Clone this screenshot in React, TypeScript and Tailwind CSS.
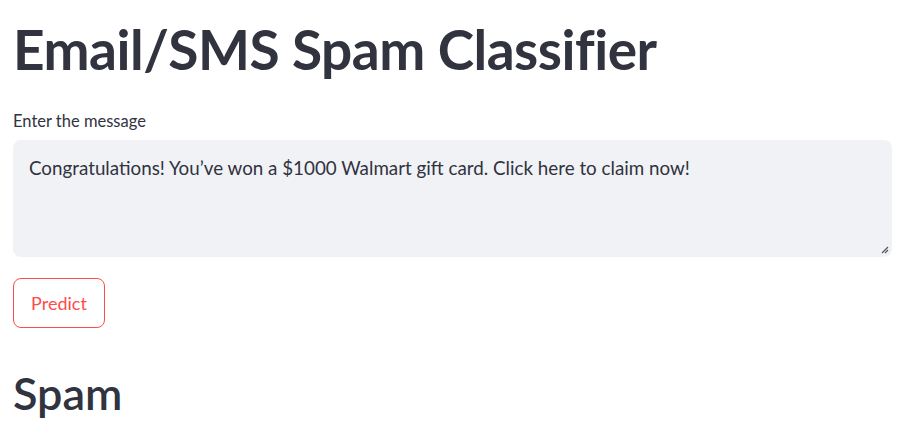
const font = { fontFamily: "Lato, 'Noto Sans', sans-serif" };

export default function App() {
  return (
    <div
      className="w-[898px] h-[421px] overflow-hidden bg-white text-[#31333f] px-[13px]"
      style={font}
    >
      <h1 className="text-[55px] font-bold leading-none pt-[22px] tracking-[-0.5px]">
        Email/SMS Spam Classifier
      </h1>
      <label className="block text-[16.5px] mt-[34px] leading-[20px]">Enter the message</label>
      <div className="relative mt-[9px] w-[879px] h-[117px] rounded-lg bg-[#f0f2f6] px-4 pt-[15px]">
        <p className="text-[18.8px] leading-[26px]">
          Congratulations! You’ve won a $1000 Walmart gift card. Click here to claim now!
        </p>
        <svg className="absolute right-[3px] bottom-[3px]" width="8" height="8" viewBox="0 0 8 8">
          <path d="M1 7 L7 1 M4 7 L7 4" stroke="#555" strokeWidth="1.2" />
        </svg>
      </div>
      <button className="mt-[21px] h-[50px] w-[92px] rounded-lg border border-[#ff4b4b] text-[#ff4b4b] text-[18px] bg-white">
        Predict
      </button>
      <h2 className="text-[45px] font-semibold leading-none mt-[43px]">Spam</h2>
    </div>
  );
}
